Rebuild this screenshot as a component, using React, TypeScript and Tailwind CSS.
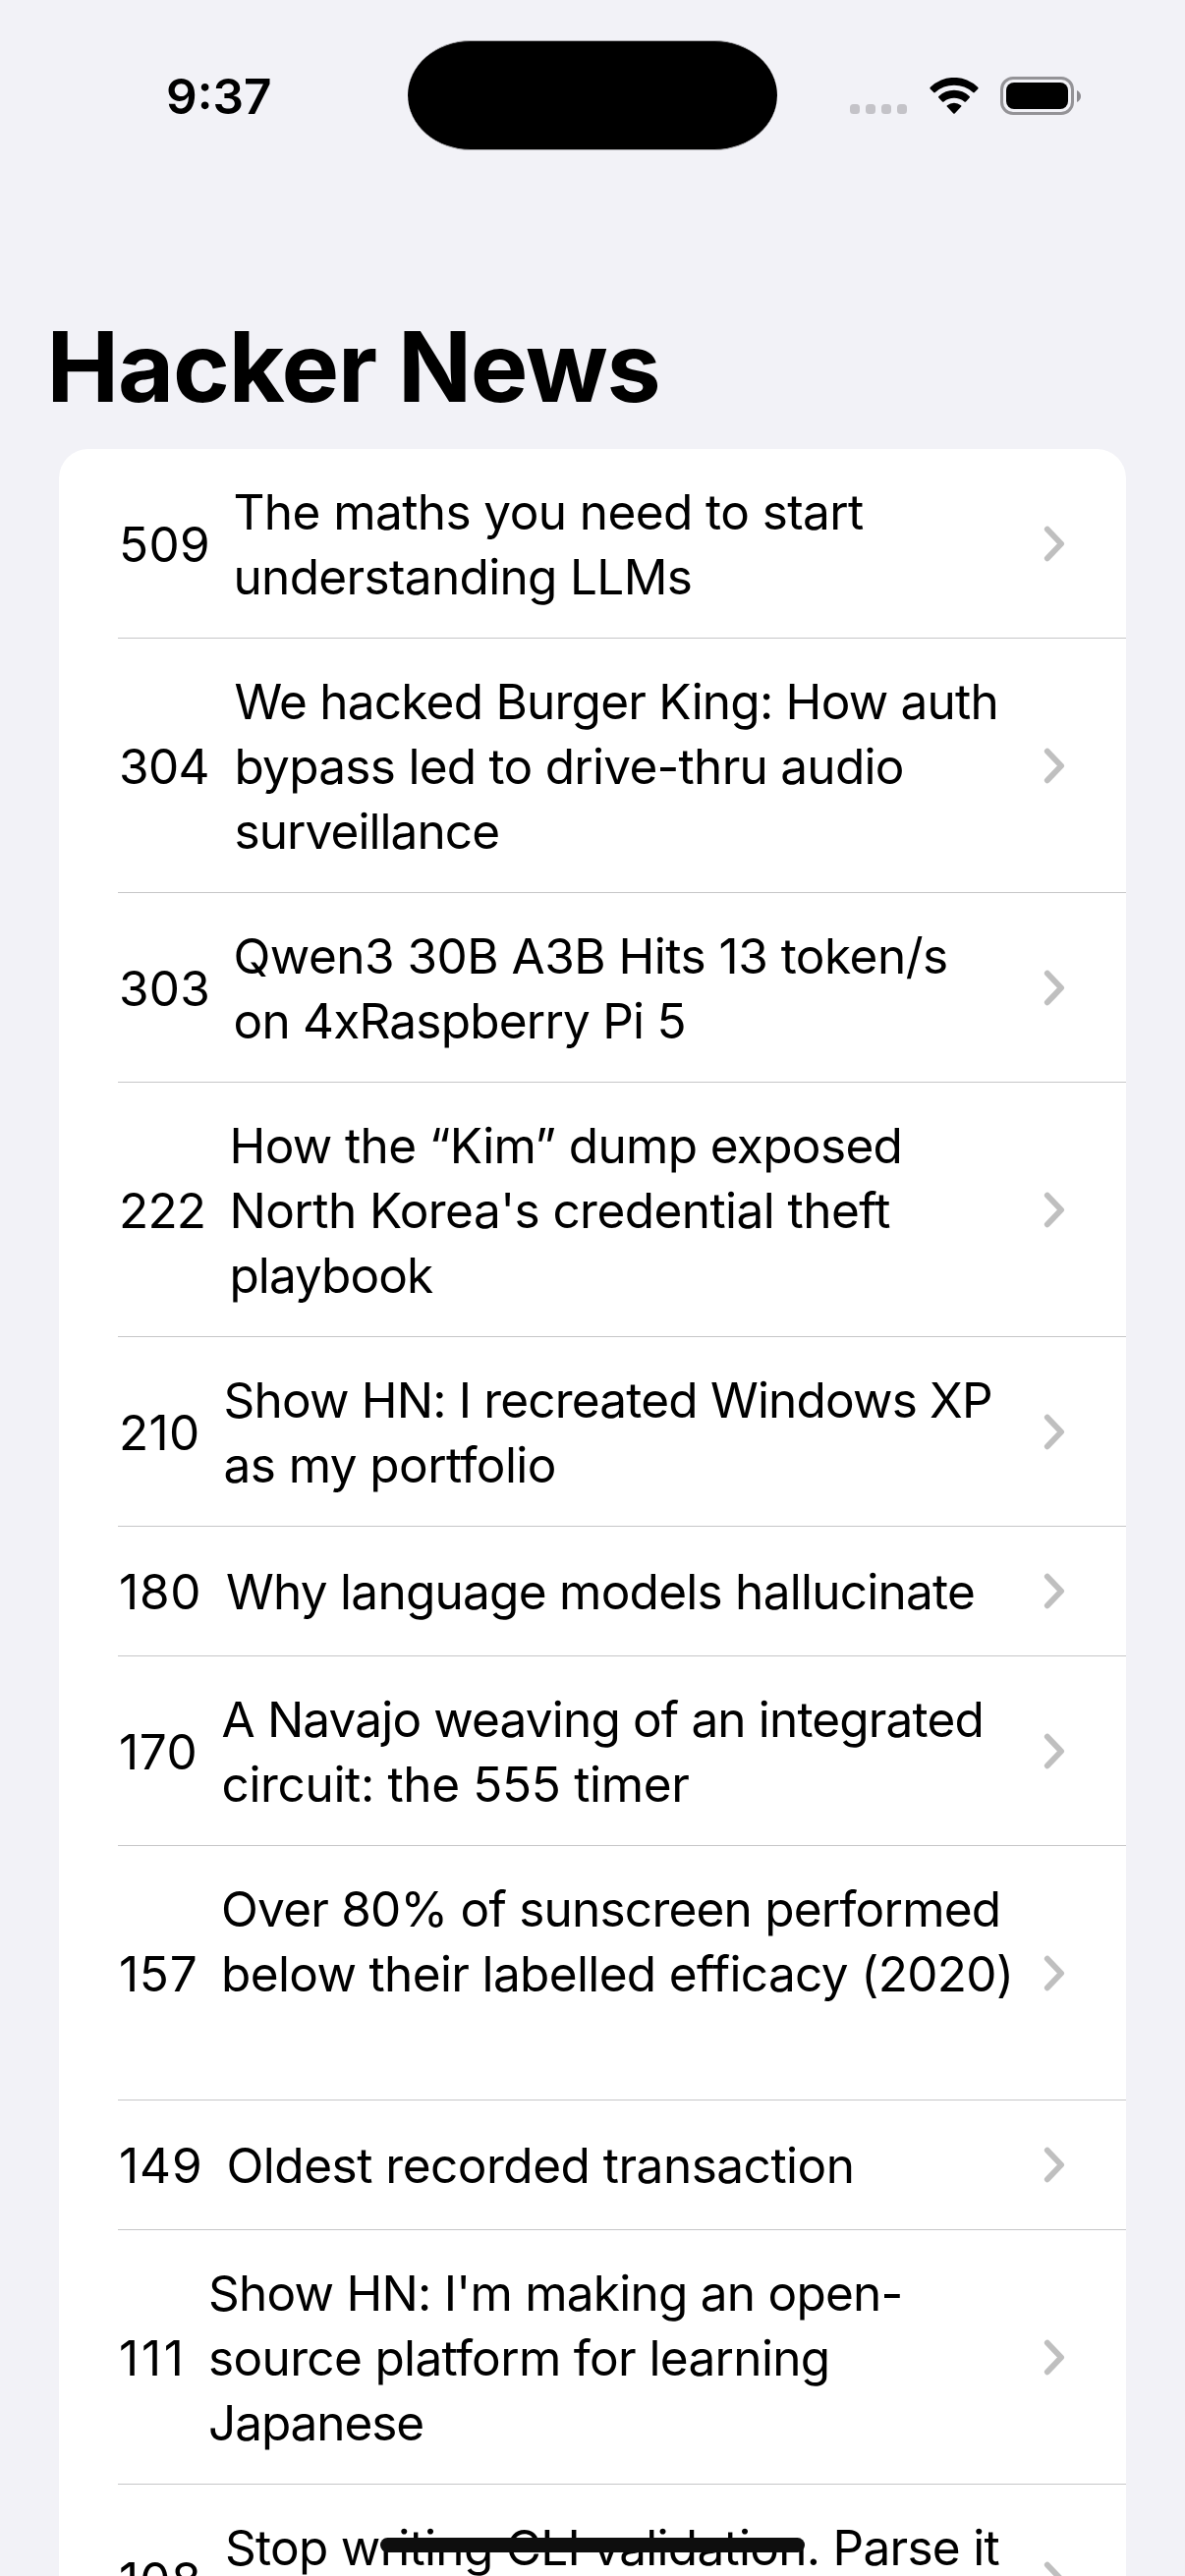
type Line = { text: string; tracking: string };
type Story = {
  points: string;
  pointsTracking: string;
  pointsWidth: string;
  lines: Line[];
};

const stories: Story[] = [
  {
    points: "509",
    pointsTracking: "tracking-[0.3px]",
    pointsWidth: "w-[116.5px]",
    lines: [
      { text: "The maths you need to start", tracking: "tracking-[-0.58px]" },
      { text: "understanding LLMs", tracking: "tracking-[-0.66px]" },
    ],
  },
  {
    points: "304",
    pointsTracking: "tracking-[-0.6px]",
    pointsWidth: "w-[117.5px]",
    lines: [
      { text: "We hacked Burger King: How auth", tracking: "tracking-[-0.76px]" },
      { text: "bypass led to drive-thru audio", tracking: "tracking-[-0.72px]" },
      { text: "surveillance", tracking: "tracking-[-0.92px]" },
    ],
  },
  {
    points: "303",
    pointsTracking: "tracking-[0.2px]",
    pointsWidth: "w-[116.5px]",
    lines: [
      { text: "Qwen3 30B A3B Hits 13 token/s", tracking: "tracking-[-0.51px]" },
      { text: "on 4xRaspberry Pi 5", tracking: "tracking-[-0.78px]" },
    ],
  },
  {
    points: "222",
    pointsTracking: "tracking-[-0.8px]",
    pointsWidth: "w-[112.5px]",
    lines: [
      { text: "How the “Kim” dump exposed", tracking: "tracking-[-0.64px]" },
      { text: "North Korea's credential theft", tracking: "tracking-[-0.55px]" },
      { text: "playbook", tracking: "tracking-[-0.96px]" },
    ],
  },
  {
    points: "210",
    pointsTracking: "tracking-[0.3px]",
    pointsWidth: "w-[106.5px]",
    lines: [
      { text: "Show HN: I recreated Windows XP", tracking: "tracking-[-0.81px]" },
      { text: "as my portfolio", tracking: "tracking-[-0.56px]" },
    ],
  },
  {
    points: "180",
    pointsTracking: "tracking-[0.8px]",
    pointsWidth: "w-[109px]",
    lines: [{ text: "Why language models hallucinate", tracking: "tracking-[-0.74px]" }],
  },
  {
    points: "170",
    pointsTracking: "tracking-[0.6px]",
    pointsWidth: "w-[104.5px]",
    lines: [
      { text: "A Navajo weaving of an integrated", tracking: "tracking-[-0.84px]" },
      { text: "circuit: the 555 timer", tracking: "tracking-[-0.34px]" },
    ],
  },
  {
    points: "157",
    pointsTracking: "tracking-[0.7px]",
    pointsWidth: "w-[104px]",
    lines: [
      { text: "Over 80% of sunscreen performed", tracking: "tracking-[-0.77px]" },
      { text: "below their labelled efficacy (2020)", tracking: "tracking-[-0.64px]" },
      { text: "", tracking: "tracking-normal" },
    ],
  },
  {
    points: "149",
    pointsTracking: "tracking-[0.9px]",
    pointsWidth: "w-[109.5px]",
    lines: [{ text: "Oldest recorded transaction", tracking: "tracking-[-0.49px]" }],
  },
  {
    points: "111",
    pointsTracking: "tracking-[2.8px]",
    pointsWidth: "w-[91px]",
    lines: [
      { text: "Show HN: I'm making an open-", tracking: "tracking-[-0.75px]" },
      { text: "source platform for learning", tracking: "tracking-[-0.65px]" },
      { text: "Japanese", tracking: "tracking-[-1.08px]" },
    ],
  },
  {
    points: "108",
    pointsTracking: "tracking-[1px]",
    pointsWidth: "w-[108px]",
    lines: [
      { text: "Stop writing CLI validation. Parse it", tracking: "tracking-[-0.71px]" },
      { text: "", tracking: "tracking-normal" },
    ],
  },
];

const rowHeights: Record<number, string> = {
  1: "h-[132px] pt-px",
  2: "h-[193px] pt-[2px]",
  3: "h-[259px] pt-[2px]",
};

function Chevron() {
  return (
    <svg width="22" height="37" viewBox="0 0 22 37" fill="none" className="-mt-[2px] mr-[62px] shrink-0">
      <path
        d="M3.9 3.7 L18 18.5 L3.9 33.3"
        stroke="#bfbfbf"
        strokeWidth="6"
        strokeLinecap="round"
        strokeLinejoin="round"
      />
    </svg>
  );
}

function StoryRow({ story, last }: { story: Story; last: boolean }) {
  return (
    <li
      className={`ml-[60px] flex shrink-0 items-center border-b ${
        last ? "border-transparent" : "border-[#c6c6c8]"
      } ${rowHeights[story.lines.length]}`}
    >
      <span className={`ml-px shrink-0 whitespace-pre ${story.pointsWidth} ${story.pointsTracking}`}>
        {story.points}
      </span>
      <div className="min-w-0 flex-1">
        {story.lines.map((line, i) => (
          <div key={i} className={`h-[66px] whitespace-pre ${line.tracking}`}>
            {line.text}
          </div>
        ))}
      </div>
      <Chevron />
    </li>
  );
}

function StatusBar() {
  return (
    <header className="flex h-[314px] shrink-0 items-start">
      <div className="mt-[65px] ml-[169px] w-[246px] shrink-0 text-[49.5px] leading-[66px] font-semibold">
        9:37
      </div>
      <div className="mt-[41px] h-[112px] w-[376px] shrink-0 border-y border-[#a9a8ac] bg-black [border-radius:64px/56px]" />
      <div className="mt-[106px] ml-[74px] flex shrink-0 gap-[6px]">
        {[0, 1, 2, 3].map((i) => (
          <span key={i} className="size-[10px] rounded-[3.5px] bg-[#c4c3c8]" />
        ))}
      </div>
      <svg width="50" height="37" viewBox="0 0 50 37" className="mt-[79px] ml-[22.5px] shrink-0">
        <path d="M0.7 11.4 Q0 10.6 0.8 9.8 A34.5 34.5 0 0 1 49.2 9.8 Q50 10.6 49.3 11.4 L45.8 15.1 Q45 15.9 44.2 15.1 A28.5 28.5 0 0 0 5.8 15.1 Q5 15.9 4.2 15.1 Z" />
        <path d="M9.3 20.6 Q8.6 19.8 9.4 19 A22.6 22.6 0 0 1 40.6 19 Q41.4 19.8 40.7 20.6 L37 24.4 Q36.2 25.1 35.4 24.4 A16.4 16.4 0 0 0 14.6 24.4 Q13.8 25.1 13 24.4 Z" />
        <path d="M18 29.7 Q17.2 28.9 18 28.2 A11 11 0 0 1 32 28.2 Q32.8 28.9 32 29.7 L25.7 36.5 Q25 37.2 24.3 36.5 Z" />
      </svg>
      <div className="mt-[78px] ml-[22.5px] flex shrink-0 items-center gap-[3px]">
        <div className="h-[39px] w-[75px] rounded-[13px] border-[3px] border-[#949397] p-[3px]">
          <div className="h-full w-full rounded-[8px] bg-black" />
        </div>
        <svg width="4" height="12" viewBox="0 0 4 12">
          <path d="M0 0 C2.5 1 4 3.4 4 6 C4 8.6 2.5 11 0 12 Z" fill="#8c8b90" />
        </svg>
      </div>
    </header>
  );
}

export default function App() {
  return (
    <div className="relative flex h-[2622px] w-[1206px] flex-col overflow-hidden bg-[#f2f2f7] font-['Inter',sans-serif] text-black">
      <StatusBar />
      <h1 className="ml-[47.5px] shrink-0 text-[98.5px] leading-[120px] font-bold tracking-[-1.19px]">
        Hacker News
      </h1>
      <ul className="mx-[60px] mt-[23px] min-h-0 flex-1 overflow-hidden rounded-t-[30px] bg-white text-[49.5px] leading-[66px]">
        {stories.map((story, i) => (
          <StoryRow key={story.points} story={story} last={i === stories.length - 1} />
        ))}
      </ul>
      <div className="absolute top-[2583px] left-[387px] h-[15px] w-[432px] rounded-full bg-[#0e0e0e]" />
    </div>
  );
}
